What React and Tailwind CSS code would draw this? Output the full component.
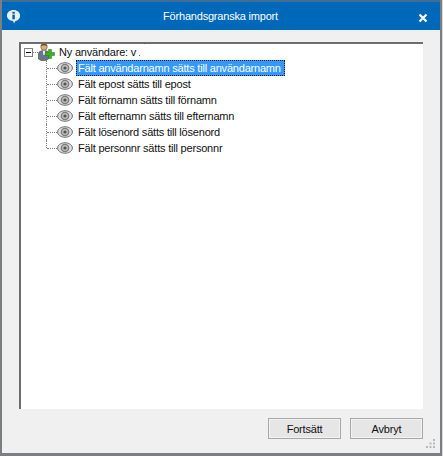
const font = { fontFamily: '"Liberation Sans", Arial, sans-serif' };

function Eye() {
  return (
    <svg width="16" height="12" viewBox="0 0 16 12" className="shrink-0">
      <ellipse cx="8" cy="6" rx="7.5" ry="5.3" fill="#dcdcdc" stroke="#777777" strokeWidth="1" />
      <circle cx="8" cy="6" r="4.3" fill="#7d7d7d" />
      <circle cx="8" cy="6" r="3" fill="#bdbdbd" />
      <circle cx="8" cy="6" r="1.6" fill="#555555" />
    </svg>
  );
}

function UserAdd() {
  return (
    <svg width="17" height="18" viewBox="0 0 17 18" className="shrink-0">
      <circle cx="6" cy="4" r="3.2" fill="#d9b07a" stroke="#7a5a35" strokeWidth="0.7" />
      <path d="M2.5 3 C3 0.2 9 0.2 9.5 3 L6 2.2 Z" fill="#5b4426" />
      <path d="M0.5 16 L0.5 11 C0.5 8.5 3 7.6 6 7.6 C9 7.6 10.5 8.5 10.5 10 L10.5 16 L7 17.5 L3 17.5 Z" fill="#6b7684" stroke="#37424f" strokeWidth="0.6" />
      <path d="M4.8 7.8 L7.2 7.8 L6.6 12 L5.4 12 Z" fill="#f2f2f2" />
      <path d="M10.5 6.5 H13.5 V9.5 H16.5 V12.5 H13.5 V15.5 H10.5 V12.5 H7.5 V9.5 H10.5 Z" fill="#3fae2a" stroke="#1f7a17" strokeWidth="0.5" />
    </svg>
  );
}

function Row({ text, selected, last }) {
  return (
    <div className="flex h-4 items-stretch">
      <div className="relative w-[11px] shrink-0">
        <div className={`border-l border-dotted border-[#808080] ${last ? "h-2" : "h-4"}`} />
        <div className="absolute left-[1px] top-2 w-[10px] border-t border-dotted border-[#808080]" />
      </div>
      <div className="flex w-[19px] shrink-0 items-center"><Eye /></div>
      {selected ? (
        <span className="flex items-center border border-dotted border-[#1a1a1a] bg-[#3399ff] pl-px pr-[3px] text-white">{text}</span>
      ) : (
        <span className="flex items-center pl-[2px] text-[#111111]">{text}</span>
      )}
    </div>
  );
}

function Grip() {
  const dots = [[7, 0], [3.5, 3.5], [7, 3.5], [0, 7], [3.5, 7], [7, 7]];
  return (
    <svg width="9" height="9" viewBox="0 0 9 9" className="absolute bottom-[5px] right-[5px]">
      {dots.map(([x, y]) => (
        <rect key={`${x}-${y}`} x={x} y={y} width="2" height="2" fill="#b8b8b8" />
      ))}
    </svg>
  );
}

export default function App() {
  const rows = [
    "Fält användarnamn sätts till användarnamn",
    "Fält epost sätts till epost",
    "Fält förnamn sätts till förnamn",
    "Fält efternamn sätts till efternamn",
    "Fält lösenord sätts till lösenord",
    "Fält personnr sätts till personnr",
  ];
  const buttonClass = "h-[21px] w-[73px] border border-[#a8a8a8] bg-[#e6e6e6] text-[#111111] shadow-[inset_0_0_0_1px_#f2f2f2]";
  return (
    <div className="h-[456px] w-[443px] bg-[#dcdcdc] pr-px">
      <div style={font} className="relative flex h-full w-full flex-col overflow-hidden border-b-[3px] border-l-2 border-r-2 border-[#7b7f83] bg-[#f0f0f0] text-[11px] leading-4 tracking-[-0.2px]">
        <div className="relative -ml-[2px] -mr-[2px] flex h-[30px] shrink-0 items-center justify-center border-t-2 border-[#3f6f96] bg-[#0068b8] text-white">
          <svg width="15" height="15" viewBox="0 0 16 16" className="absolute left-[6px] top-[7px]">
            <path d="M8 1 C12 1 15 3.5 15 7 C15 10.5 12.5 12.5 10 12.8 L8.5 15.5 L7.6 12.9 C4 12.6 1 10.5 1 7 C1 3.5 4 1 8 1 Z" fill="#e8f1f8" />
            <rect x="6.8" y="3" width="2.6" height="2" fill="#0a5a9c" />
            <rect x="6.8" y="6" width="2.6" height="5" fill="#0a5a9c" />
          </svg>
          <span className="pr-[1px]">Förhandsgranska import</span>
          <svg width="10" height="10" viewBox="0 0 10 10" className="absolute right-[14px] top-[11px]">
            <path d="M1.5 1.5 L8.5 8.5 M8.5 1.5 L1.5 8.5" stroke="#fff" strokeWidth="2.2" />
          </svg>
        </div>
        <div className="flex flex-1 flex-col pl-[17px] pr-[17px] pt-3">
          <div className="h-[367px] shrink-0 border-l-2 border-t-2 border-[#6d6d6d] bg-white pl-[3px] pt-0">
            <div className="flex h-4 items-center">
              <div className="flex h-[9px] w-[9px] shrink-0 items-center justify-center border border-[#808080] bg-white">
                <div className="h-px w-[5px] bg-black" />
              </div>
              <div className="w-[5px] border-t border-dotted border-[#808080]" />
              <div className="flex w-[21px] shrink-0 items-center"><UserAdd /></div>
              <span className="relative text-[#111111]">
                Ny användare: v
                <span className="absolute -top-[1px] left-[85px] h-px w-px bg-[#555555]" />
                <span className="absolute top-[11px] left-[80px] h-px w-px bg-[#555555]" />
              </span>
            </div>
            <div className="ml-[22px]">
              {rows.map((t, i) => (
                <Row key={t} text={t} selected={i === 0} last={i === rows.length - 1} />
              ))}
            </div>
          </div>
          <div className="flex justify-end gap-[9px] pt-[9px]">
            <button className={buttonClass}>Fortsätt</button>
            <button className={buttonClass}>Avbryt</button>
          </div>
        </div>
        <Grip />
      </div>
    </div>
  );
}
